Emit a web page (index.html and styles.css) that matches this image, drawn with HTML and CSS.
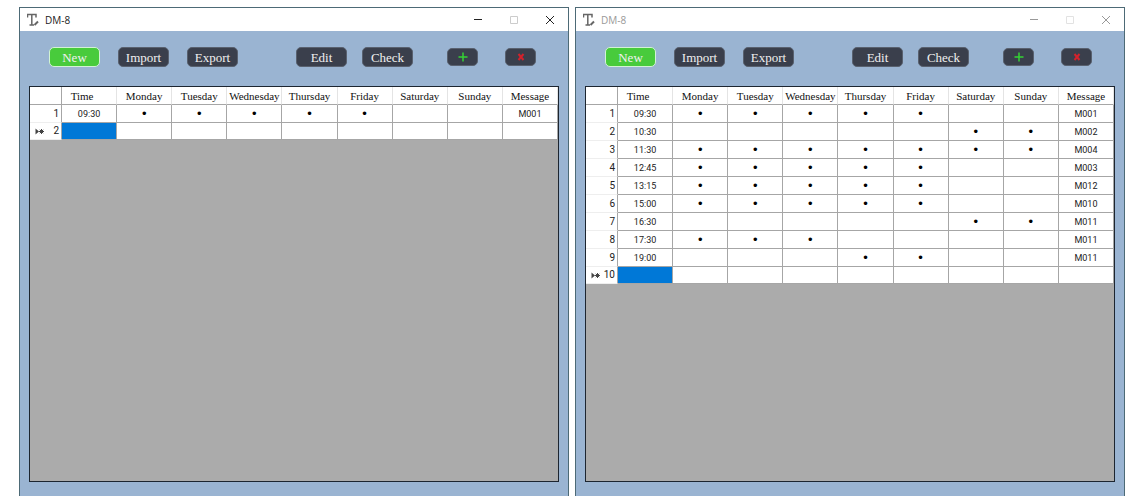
FILE: index.html
```html
<!DOCTYPE html>
<html lang="en">
<head>
  <meta charset="UTF-8">
  <meta name="viewport" content="width=device-width, initial-scale=1.0">
  <title>DM-8</title>
  <link rel="stylesheet" href="styles.css">
</head>
<body>
  <section class="window">
    <header class="titlebar">
      <svg class="logo" viewBox="0 0 12 14"><path class="letter" d="M0.5 4.5V1.5H9V4.5M4.8 1.5V12M2.5 12H7"/><path class="tail" d="M7.5 12L11 8.5"/></svg>
      <h1>DM-8</h1>
      <div class="window-buttons">
        <button aria-label="Minimize"><svg viewBox="0 0 10 10"><path d="M1 4.5H9"/></svg></button>
        <button aria-label="Maximize" disabled><svg viewBox="0 0 10 10"><path d="M1.5 1.5H8.5V8.5H1.5Z"/></svg></button>
        <button aria-label="Close"><svg viewBox="0 0 10 10"><path d="M1 1L9 9M9 1L1 9"/></svg></button>
      </div>
    </header>
    <nav class="toolbar">
      <div class="group file-group">
        <button class="btn new">New</button>
        <button class="btn">Import</button>
        <button class="btn">Export</button>
      </div>
      <div class="group edit-group">
        <button class="btn">Edit</button>
        <button class="btn">Check</button>
      </div>
      <div class="group row-group">
        <button class="btn small add" aria-label="Add row"><svg viewBox="0 0 10 10"><path d="M5 0.5V9.5M0.5 5H9.5"/></svg></button>
        <button class="btn small remove" aria-label="Remove row"><svg viewBox="0 0 10 10"><path d="M2.5 2L7.5 8M7.5 2L2.5 8"/></svg></button>
      </div>
    </nav>
    <main class="sheet">
      <table id="shortSchedule"></table>
    </main>
  </section>

  <section class="window inactive">
    <header class="titlebar">
      <svg class="logo" viewBox="0 0 12 14"><path class="letter" d="M0.5 4.5V1.5H9V4.5M4.8 1.5V12M2.5 12H7"/><path class="tail" d="M7.5 12L11 8.5"/></svg>
      <h1>DM-8</h1>
      <div class="window-buttons">
        <button aria-label="Minimize"><svg viewBox="0 0 10 10"><path d="M1 4.5H9"/></svg></button>
        <button aria-label="Maximize" disabled><svg viewBox="0 0 10 10"><path d="M1.5 1.5H8.5V8.5H1.5Z"/></svg></button>
        <button aria-label="Close"><svg viewBox="0 0 10 10"><path d="M1 1L9 9M9 1L1 9"/></svg></button>
      </div>
    </header>
    <nav class="toolbar">
      <div class="group file-group">
        <button class="btn new">New</button>
        <button class="btn">Import</button>
        <button class="btn">Export</button>
      </div>
      <div class="group edit-group">
        <button class="btn">Edit</button>
        <button class="btn">Check</button>
      </div>
      <div class="group row-group">
        <button class="btn small add" aria-label="Add row"><svg viewBox="0 0 10 10"><path d="M5 0.5V9.5M0.5 5H9.5"/></svg></button>
        <button class="btn small remove" aria-label="Remove row"><svg viewBox="0 0 10 10"><path d="M2.5 2L7.5 8M7.5 2L2.5 8"/></svg></button>
      </div>
    </nav>
    <main class="sheet">
      <table id="fullSchedule"></table>
    </main>
  </section>

  <script>
    const days = ["Monday", "Tuesday", "Wednesday", "Thursday", "Friday", "Saturday", "Sunday"];

    // Each entry: time, one flag per day (Monday first), message
    const shortSchedule = [
      ["09:30", "1111100", "M001"]
    ];
    const fullSchedule = [
      ["09:30", "1111100", "M001"],
      ["10:30", "0000011", "M002"],
      ["11:30", "1111111", "M004"],
      ["12:45", "1111100", "M003"],
      ["13:15", "1111100", "M012"],
      ["15:00", "1111100", "M010"],
      ["16:30", "0000011", "M011"],
      ["17:30", "1110000", "M011"],
      ["19:00", "0001100", "M011"]
    ];

    function renderSchedule(id, entries) {
      let html = "<thead><tr><th class='corner'></th><th class='time'>Time</th>";
      html += days.map(day => `<th>${day}</th>`).join("");
      html += "<th>Message</th></tr></thead><tbody>";

      entries.forEach(([time, flags, message], i) => {
        const cells = [...flags].map(flag => `<td class="day">${flag === "1" ? "•" : ""}</td>`).join("");
        html += `<tr><th scope="row">${i + 1}</th><td>${time}</td>${cells}<td>${message}</td></tr>`;
      });

      // Empty row for a new entry
      const marker = '<svg class="marker" viewBox="0 0 9 7"><path class="arrow" d="M0.5 0.5L4 3.5L0.5 6.5Z"/><path class="star" d="M6.5 1V6M4 3.5H9M4.8 1.8L8.2 5.2M8.2 1.8L4.8 5.2"/></svg>';
      html += `<tr class="new-row"><th scope="row">${marker}${entries.length + 1}</th><td class="selected"></td>`;
      html += "<td></td>".repeat(days.length + 1) + "</tr></tbody>";
      document.getElementById(id).innerHTML = html;
    }

    renderSchedule("shortSchedule", shortSchedule);
    renderSchedule("fullSchedule", fullSchedule);
  </script>
</body>
</html>
```
FILE: styles.css
```css
* {
  box-sizing: border-box;
}
body {
  display: flex;
  gap: 6px;
  min-height: 100vh;
  margin: 0;
  padding: 7px 5px 6px 19px;
  background-color: white;
  color: #222;
  font-family: Roboto, "Liberation Sans", sans-serif;
  font-size: 9px;
}
button {
  padding: 0;
  border: none;
  background: none;
  cursor: pointer;
}
svg {
  display: block;
  fill: none;
  stroke: currentColor;
}
.window {
  display: flex;
  flex: 1;
  flex-direction: column;
  border: 1px solid #4d6a76;
  border-bottom: none;
  background-color: #9ab4d2;
}

/* Title bar */
.titlebar {
  display: flex;
  align-items: center;
  height: 23px;
  padding: 0 13px 0 7px;
  background-color: white;
}
.logo {
  width: 12px;
  height: 14px;
  color: #666;
}
.letter {
  stroke-width: 1.5;
}
.tail {
  stroke-width: 2;
}
.titlebar h1 {
  margin: 0 0 0 6px;
  font-family: "Open Sans", sans-serif;
  font-size: 10px;
  font-weight: normal;
}
.window-buttons {
  display: flex;
  gap: 26px;
  margin-left: auto;
}
.window-buttons svg {
  width: 10px;
  height: 10px;
}
.window-buttons button {
  color: #222;
}
.window-buttons button:disabled {
  color: #ccc;
}
.inactive h1,
.inactive .window-buttons button {
  color: #999;
}
.inactive .window-buttons button:disabled {
  color: #e2e2e2;
}

/* Toolbar */
.toolbar {
  display: flex;
  align-items: center;
  padding: 16px 32px 19px 29px;
}
.group {
  display: flex;
  align-items: center;
}
.file-group {
  gap: 18px;
}
.edit-group {
  gap: 15px;
  margin-left: auto;
}
.row-group {
  gap: 27px;
  margin-left: 34px;
}
.btn {
  width: 51px;
  height: 20px;
  padding-top: 1px;
  border: 1px solid #59616f;
  border-radius: 5px;
  background-color: #3a3f4c;
  color: #f0f0f0;
  font-family: "Liberation Serif", serif;
  font-size: 13px;
  line-height: 17px;
}
.btn.new {
  border-color: #d2f3d4;
  background-color: #48cb3c;
}
.btn.small {
  width: 31px;
  height: 18px;
  padding: 0;
}
.btn svg {
  width: 10px;
  height: 10px;
  margin: 0 auto;
}
.btn.add {
  color: #35d335;
}
.btn.remove {
  color: #d3222c;
}
.add svg {
  stroke-width: 1.5;
}
.remove svg {
  stroke-width: 2;
}

/* Schedule grid */
.sheet {
  flex: 1;
  margin: 0 9px 14px;
  border: 1px solid #1c2530;
  background-color: #ababab;
}
table {
  width: 100%;
  table-layout: fixed;
  border-collapse: separate;
  border-spacing: 0;
  background-color: white;
}
th,
td {
  height: 18px;
  padding: 0;
  border-right: 1px solid #a6a6a6;
  border-bottom: 1px solid #a6a6a6;
  font-weight: normal;
  line-height: 16px;
  text-align: center;
}
thead th {
  padding-top: 1px;
  border-right-color: #e4e4e4;
  color: #111;
  font-family: "Liberation Serif", serif;
  font-size: 11px;
}
.corner {
  width: 32px;
  border-right-color: #a6a6a6;
}
thead .time {
  padding-right: 14px;
}
tbody th {
  padding-right: 2px;
  border-bottom-color: #eee;
  font-size: 10px;
  text-align: right;
}
.day {
  padding-top: 1px;
  color: black;
  font-family: "Liberation Sans", sans-serif;
  font-size: 13px;
}
.new-row th,
.new-row td {
  height: 17px;
}
.selected {
  background-color: #0078d7;
}
.marker {
  float: left;
  width: 9px;
  height: 7px;
  margin: 5px 0 0 5px;
  color: #444;
}
.arrow {
  fill: currentColor;
  stroke: none;
}
```
